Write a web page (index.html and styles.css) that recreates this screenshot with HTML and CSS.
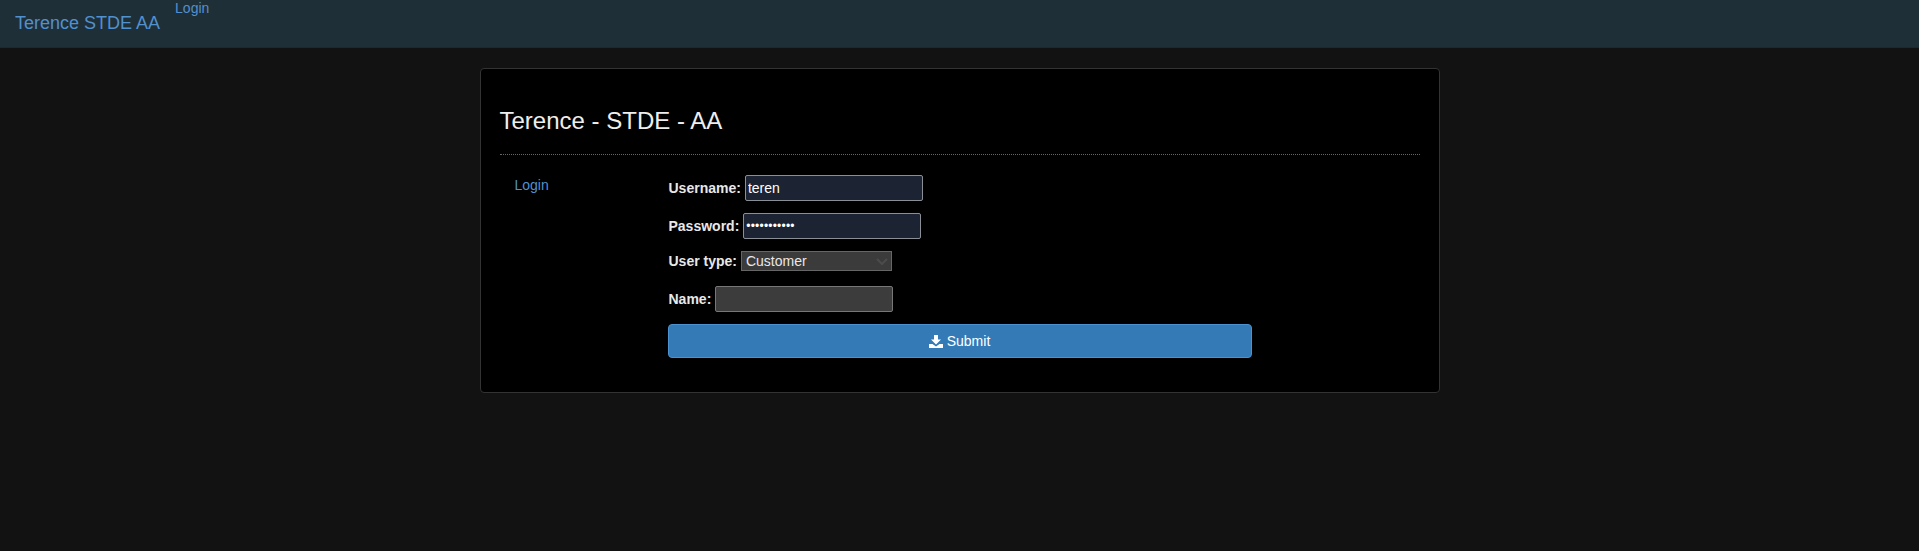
FILE: index.html
```html
<!DOCTYPE html>
<html lang="en">
<head>
  <meta charset="UTF-8">
  <title>Terence STDE AA</title>
  <link rel="stylesheet" href="styles.css">
</head>
<body>
  <nav class="navbar">
    <a class="brand" href="#">Terence STDE AA</a>
    <a class="nav-link" href="#">Login</a>
  </nav>

  <div class="container">
    <div class="page-header">
      <h1>Terence - STDE - AA</h1>
    </div>
    <div class="content">
      <div class="side">
        <a href="#">Login</a>
      </div>
      <form class="login-form">
        <div class="field field-username">
          <label for="username">Username:</label>
          <input type="text" id="username" class="input-dark" value="teren">
        </div>
        <div class="field field-password">
          <label for="password">Password:</label>
          <input type="password" id="password" class="input-dark" value="terenpasswd">
        </div>
        <div class="field field-type">
          <label for="usertype">User type:</label>
          <div class="select-wrap">
            <select id="usertype">
              <option>Customer</option>
            </select>
            <svg class="chevron" viewBox="0 0 12 7" width="12" height="7" aria-hidden="true">
              <path d="M1 1l5 5 5-5"/>
            </svg>
          </div>
        </div>
        <div class="field field-name">
          <label for="name">Name:</label>
          <input type="text" id="name" class="input-grey">
        </div>
        <button type="submit">
          <svg class="icon" viewBox="0 0 14 13" width="14" height="13" aria-hidden="true">
            <path d="M5 0h4v4.500h3L7 9.500 2 4.500h3z"/>
            <path d="M0 9h3.500L7 11.500 10.500 9H14v4H0z"/>
          </svg>
          Submit
        </button>
      </form>
    </div>
  </div>
</body>
</html>
```

FILE: styles.css
```css
* {
    box-sizing: border-box;
}

body {
    font-family: "Liberation Sans", Arial, sans-serif;
    font-size: 14px;
    line-height: 20px;
    background-color: #121212;
    color: #e8e8e8;
    margin: 0;
}

a {
    color: #5191cf;
    text-decoration: none;
}

.navbar {
    display: flex;
    align-items: flex-start;
    height: 48px;
    background-color: #1f2f38;
    border-bottom: 1px solid #1b2931;
}

.brand {
    font-size: 18px;
    line-height: 20px;
    padding: 13px 15px;
}

.nav-link {
    line-height: 16px;
}

.container {
    width: 960px;
    height: 325px;
    margin: 20px auto 0;
    padding: 0 19px;
    background-color: #000;
    border: 1px solid #333;
    border-radius: 4px;
}

.page-header {
    height: 86px;
    padding-top: 38px;
    border-bottom: 1px dotted #666;
}

h1 {
    font-size: 24px;
    line-height: 27px;
    font-weight: 500;
    color: #eee;
    margin: 0;
}

.content {
    display: flex;
}

.side {
    width: 168px;
    padding: 20px 0 0 15px;
}

.login-form {
    width: 584px;
    padding-top: 20px;
}

.field {
    display: flex;
    align-items: center;
    margin-left: 1px;
}

label {
    font-weight: bold;
    margin-right: 4px;
}

input {
    width: 178px;
    height: 26px;
    padding: 0 2px;
    border: 1px solid #8a8f96;
    border-radius: 2px;
    font: 14px "Liberation Sans", Arial, sans-serif;
    color: #fff;
}

.input-dark {
    background-color: #1c2433;
}

.input-grey {
    background-color: #3c3c3c;
    border-color: #777;
}

#password {
    font-size: 12px;
    letter-spacing: 0.2px;
}

.select-wrap {
    position: relative;
    display: flex;
}

select {
    width: 151px;
    height: 20px;
    padding: 0 0 0 4px;
    border: 1px solid #666;
    border-radius: 0;
    background-color: #3b3b3b;
    color: #e8e8e8;
    font: 14px "Liberation Sans", Arial, sans-serif;
    appearance: none;
}

.chevron {
    position: absolute;
    top: 7px;
    right: 4px;
    fill: none;
    stroke: #4c4c4c;
    stroke-width: 2;
}

.field-password {
    margin-top: 12px;
}

.field-type {
    margin-top: 12px;
}

.field-name {
    margin-top: 15px;
}

button {
    display: flex;
    justify-content: center;
    align-items: center;
    gap: 4px;
    width: 100%;
    height: 34px;
    margin-top: 12px;
    background-color: #337ab7;
    border: 1px solid #4a93d0;
    border-radius: 4px;
    color: #fff;
    font: 14px "Liberation Sans", Arial, sans-serif;
}

.icon {
    fill: #fff;
}
```
